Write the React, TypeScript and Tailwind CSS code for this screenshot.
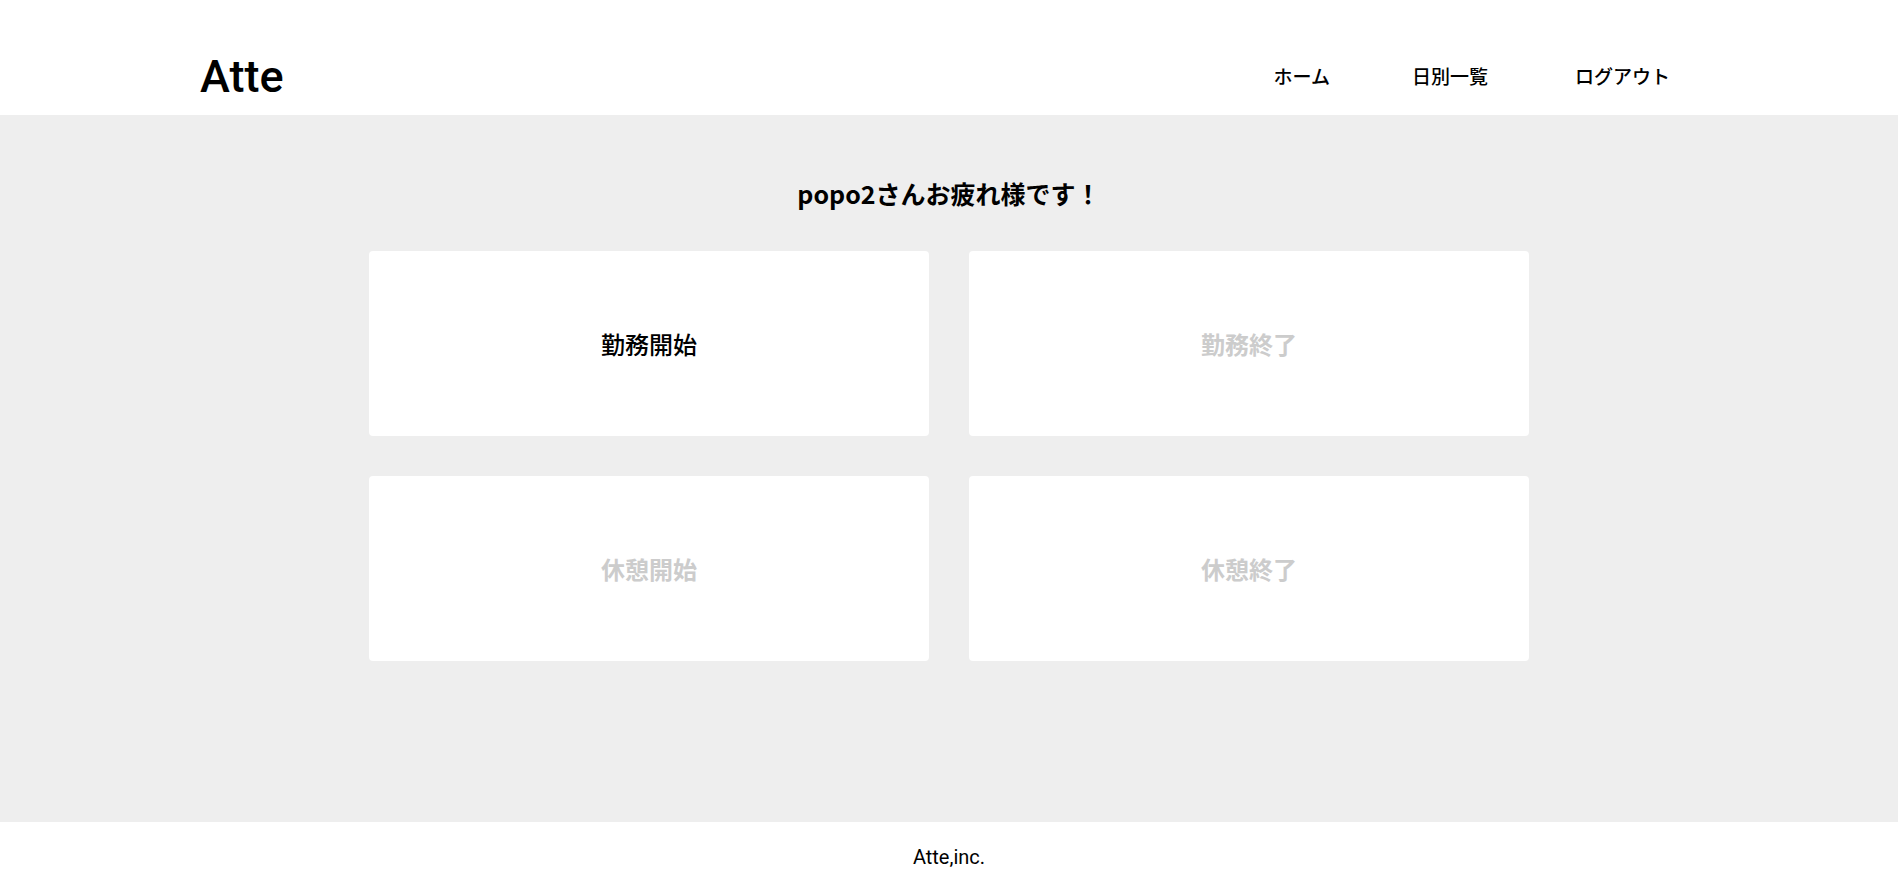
import React from "react";

const jp = { fontFamily: '"Noto Sans CJK JP", "Noto Sans", sans-serif' };

const buttons = [
  { label: "勤務開始", active: true },
  { label: "勤務終了", active: false },
  { label: "休憩開始", active: false },
  { label: "休憩終了", active: false },
];

const App = () => {
  return (
    <div className="w-full min-h-[878px] flex flex-col bg-white text-black" style={jp}>
      <header className="h-[115px] pt-[38px] pl-[200px] pr-[228px] flex items-center justify-between bg-white">
        <h1 className="text-[45px] font-medium leading-none font-['Roboto',sans-serif]">Atte</h1>
        <nav className="flex items-center text-[19px] font-medium">
          <a className="block">ホーム</a>
          <a className="block ml-[82px]">日別一覧</a>
          <a className="block ml-[87px]">ログアウト</a>
        </nav>
      </header>

      <main className="h-[707px] bg-[#eeeeee] flex flex-col items-center">
        <p className="mt-[62px] text-[25px] font-bold leading-[32px]">popo2さんお疲れ様です！</p>
        <div className="mt-[42px] grid grid-cols-2 gap-x-[40px] gap-y-[40px]">
          {buttons.map((b) => (
            <button
              key={b.label}
              className={
                b.active
                  ? "w-[560px] h-[185px] bg-white rounded-[4px] flex items-center justify-center text-[24px] font-medium text-black"
                  : "w-[560px] h-[185px] bg-white rounded-[4px] flex items-center justify-center text-[24px] font-bold text-[#cccccc]"
              }
            >
              {b.label}
            </button>
          ))}
        </div>
      </main>

      <footer className="h-[56px] bg-white flex items-center justify-center">
        <small className="text-[20px] font-['Roboto',sans-serif] pt-[14px]">Atte,inc.</small>
      </footer>
    </div>
  );
};

export default App;
